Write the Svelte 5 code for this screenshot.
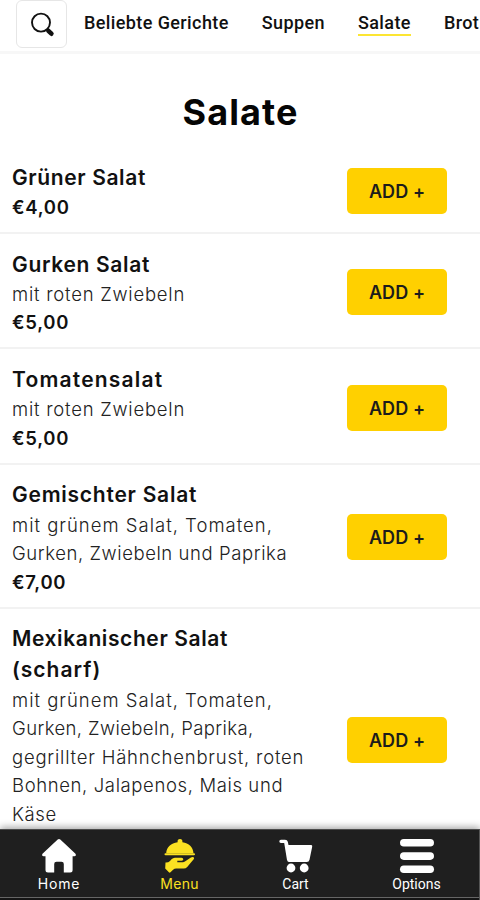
<script>
  const categories = [
    { name: 'Beliebte Gerichte' },
    { name: 'Suppen' },
    { name: 'Salate', active: true },
    { name: 'Brot' },
  ];
  // Each text line carries its own tracking in pixels.
  const dishes = [
    { title: [['Grüner Salat', 0.62]], lines: [], price: '€4,00' },
    { title: [['Gurken Salat', 0.67]], lines: [['mit roten Zwiebeln', 0.76]], price: '€5,00' },
    { title: [['Tomatensalat', 1.2]], lines: [['mit roten Zwiebeln', 0.76]], price: '€5,00' },
    {
      title: [['Gemischter Salat', 0.75]],
      lines: [['mit grünem Salat, Tomaten,', 1], ['Gurken, Zwiebeln und Paprika', 0.58]],
      price: '€7,00',
    },
    {
      title: [['Mexikanischer Salat', 0.6], ['(scharf)', 1]],
      lines: [
        ['mit grünem Salat, Tomaten,', 1],
        ['Gurken, Zwiebeln, Paprika,', 0.4],
        ['gegrillter Hähnchenbrust, roten', 0.78],
        ['Bohnen, Jalapenos, Mais und', 0.62],
        ['Käse', 0.6],
      ],
    },
  ];
</script>

<div class="screen">
  <header>
    <button class="search" aria-label="Suche">
      <svg width="26" height="26" viewBox="0 0 26 26">
        <circle cx="11" cy="10.6" r="9" fill="none" stroke="#111" stroke-width="1.9" />
        <path d="M17 17.200l1.600 1.600" stroke="#111" stroke-width="2" />
        <path d="M18.400 18.800l3 2.900" stroke="#111" stroke-width="4.600" stroke-linecap="round" />
      </svg>
    </button>
    <nav class="tabs">
      {#each categories as c}
        <span class:active={c.active}>{c.name}</span>
      {/each}
    </nav>
  </header>

  <main>
    <h1>Salate</h1>
    {#each dishes as d}
      <article>
        <div class="info" class:open={!d.price}>
          <h2>{#each d.title as [text, ls]}<span style="letter-spacing:{ls}px">{text}</span>{/each}</h2>
          {#if d.lines.length}
            <p>{#each d.lines as [text, ls]}<span style="letter-spacing:{ls}px">{text}</span>{/each}</p>
          {/if}
          {#if d.price}<strong>{d.price}</strong>{/if}
        </div>
        <button class="add">ADD +</button>
      </article>
    {/each}
  </main>

  <footer>
    <a class="home">
      <svg width="36" height="36" viewBox="0 0 36 36" fill="currentColor">
        <path d="M16.700 1.500q1.300-1.200 2.600 0L34.500 15.800q1.200 2-1.200 2.500H31.600V32q0 2.500-2.500 2.500h-6.300V26q0-2.300-2.300-2.300h-5Q13.200 23.700 13.200 26v8.500H7Q4.500 34.500 4.500 32V18.300H2.700Q.3 17.800 1.500 15.800z" />
      </svg>
      <span>Home</span>
    </a>
    <a class="menu">
      <svg width="36" height="36" viewBox="0 0 36 36" fill="currentColor">
        <path d="M4.200 15.300C4.600 9.300 9 5.100 15.600 4.300V3.700Q15.400 1 18 1t2.400 2.700v.6C27 5.100 31 9.300 31.500 15.300z" />
        <rect x="2.500" y="15.300" width="30.500" height="2" rx="1" />
        <path d="M3.500 24.600q2.800.2 4.500-1.700l1.500-1.700q1.500-1.500 3.400-1.500h6.600q1.800.1 1.800 1.500t-1.600 1.600h-4.400v1.500h5.600q1 0 2-.7l6-4.100q1.200-.6 2.700-.3.900.6.3 1.700l-6.700 8q-1.400 1.500-3.400 1.500h-7.600q-1.800 0-3.100 1.300l-2.600 2.600q-.8.700-1.600 0L3.200 30.600z" />
      </svg>
      <span>Menu</span>
    </a>
    <a class="cart">
      <svg width="36" height="36" viewBox="0 0 36 36" fill="currentColor">
        <path d="M2.900 1.700h4.200q2.200 0 2.700 2.100l.7 3.300h22.700q1.300.2 1 1.600l-2.700 13.100q-.5 2.300-2.700 2.300H11.700q-2.200 0-2.700-2.200L6.200 5H2.900Q1.300 4.800 1.300 3.300 1.300 1.900 2.900 1.700z" />
        <circle cx="13" cy="30" r="4.400" />
        <circle cx="26.200" cy="30" r="4.400" />
      </svg>
      <span>Cart</span>
    </a>
    <a class="options">
      <svg width="36" height="36" viewBox="0 0 36 36" fill="currentColor">
        <rect x="1" y="1" width="34" height="7.600" rx="3.800" />
        <rect x="1" y="14.300" width="34" height="7.600" rx="3.800" />
        <rect x="1" y="27.500" width="34" height="7.600" rx="3.800" />
      </svg>
      <span>Options</span>
    </a>
  </footer>
</div>

<style>
  :global(body) { margin: 0; background: #fff; overflow: hidden; }
  .screen {
    width: 480px; height: 900px; overflow: hidden; background: #fff;
    display: flex; flex-direction: column; box-sizing: border-box;
    font-family: Inter, 'Liberation Sans', sans-serif; color: #111;
  }
  header {
    height: 54px; flex: none; box-sizing: border-box; border-bottom: 3px solid #f7f7f7;
    display: flex; align-items: flex-start; padding-left: 16px;
  }
  .search {
    flex: none; width: 51px; height: 48px; box-sizing: border-box; padding: 2px 0 0 2px;
    background: #fff; border: 1px solid #e6e6e6; border-radius: 6px;
    display: flex; align-items: center; justify-content: center;
  }
  .tabs {
    display: flex; gap: 33px; margin-left: 17px; padding-top: 13px; white-space: nowrap;
    font: 500 18px/20px Roboto, sans-serif; letter-spacing: 0.400px;
  }
  .tabs span { height: 21px; border-bottom: 2px solid transparent; }
  .tabs .active { border-color: #fce533; }
  main { flex: 1; min-height: 0; overflow: hidden; }
  h1 {
    margin: 0; height: 93px; padding: 35px 0 0 1px; box-sizing: border-box; text-align: center;
    font-size: 36px; line-height: 46px; font-weight: 750; color: #050505; letter-spacing: 1.100px;
  }
  article {
    display: flex; align-items: center; justify-content: space-between;
    padding: 14.700px 33px 10.500px 12px; border-bottom: 2px solid #f2f2f2;
  }
  .open { padding-bottom: 28.500px; }
  h2 { margin: 0; font-size: 21px; line-height: 31.200px; font-weight: 560; }
  p { margin: 0; font-size: 18.500px; line-height: 28.500px; font-weight: 300; color: #222; }
  h2 span, p span { display: block; width: max-content; white-space: nowrap; }
  strong { display: block; font-size: 18.500px; line-height: 28.500px; font-weight: 620; letter-spacing: 0.700px; }
  .add {
    flex: none; width: 100px; height: 46px; padding: 2px 0 0; margin-top: -0.500px; border: 0; border-radius: 5px;
    background: #ffd000; color: #1c1c1c; font: 640 18px/44px Inter, sans-serif; letter-spacing: 0.100px;
  }
  footer {
    position: relative; flex: none; height: 71px; box-sizing: border-box; background: #1f1f1f; color: #fff;
    border-top: 1px solid #4a4a4a; border-right: 1px solid #555;
    box-shadow: 0 -2px 7px rgba(0, 0, 0, 0.35), inset 0 -2px 0 #151515, inset 0 -3px 0 #666;
    display: grid; grid-template-columns: 118px 123px 109px 133px;
  }
  footer a { display: flex; flex-direction: column; align-items: center; padding-top: 8px; }
  footer svg { display: block; }
  footer span { font-size: 14px; line-height: 20px; }
  .home span { letter-spacing: 0.800px; }
  .menu span { letter-spacing: 0.300px; }
  .menu { color: #fbe122; }
  .cart span, .options span { font-family: Roboto, sans-serif; }
</style>
